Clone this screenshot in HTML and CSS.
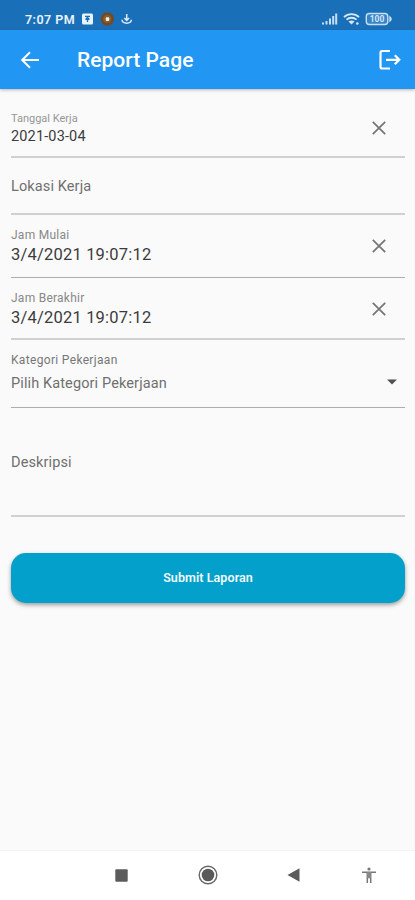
FILE: index.html
```html
<!DOCTYPE html>
<html lang="id">
<head>
<meta charset="utf-8">
<title>Report Page</title>
<link rel="stylesheet" href="styles.css">
</head>
<body>
<div class="status">
  <span class="time">7:07 PM</span>
  <svg class="notes" width="54" height="14" viewBox="0 0 54 14">
    <rect x="0" y="1.500" width="11" height="11" rx="1.500" fill="#e8f3fc"/>
    <path d="M3 4.300h5M5.500 10V6M3.500 7.500l2-2 2 2" stroke="#1a70b8" stroke-width="1.300" fill="none"/>
    <circle cx="25.300" cy="7" r="6.800" fill="#704a2b"/>
    <circle cx="25.300" cy="7" r="4" fill="#87602f"/>
    <rect x="23.800" y="5.200" width="3.400" height="3.800" rx="1" fill="#f5ede3"/>
    <path d="M44.700 2v6M42.300 6l2.400 2.400L47.100 6M40 7.800c.3 4.500 9.100 4.500 9.400 0" stroke="#d9eafa" stroke-width="1.500" fill="none"/>
  </svg>
  <svg class="signals" width="74" height="14" viewBox="0 0 74 14">
    <path d="M2 12.500v-2M5.500 12.500V9M9 12.500V6.500M12.200 12.500V4M15.200 12.500V1.500" stroke="#c5def4" stroke-width="2"/>
    <path d="M23 5.200c4.200-4 10.800-4 15 0M25.500 7.700c2.800-2.600 7.200-2.600 10 0" stroke="#d5e8f8" stroke-width="1.800" fill="none"/>
    <path d="M27.500 9.500q3-2.200 6 0l-3 3z" fill="#d5e8f8"/>
    <circle cx="36.300" cy="11.500" r="1.300" fill="#d5e8f8"/>
    <rect x="45.300" y="1.500" width="21.500" height="11" rx="3" fill="#3984c4" stroke="#c5def4" stroke-width="1.400"/>
    <path d="M68.300 3.500q5 3.500 0 7z" fill="#c5def4"/>
    <text class="charge" x="56" y="10" text-anchor="middle">100</text>
  </svg>
</div>
<header class="appbar">
  <svg class="back" width="20" height="18" viewBox="0 0 20 18"><path d="M19 9H2.500M10 1.200L2.200 9l7.800 7.800" fill="none" stroke="#fff" stroke-width="2"/></svg>
  <h1>Report Page</h1>
  <svg class="logout" width="24" height="22" viewBox="0 0 24 22"><path d="M12 2H4.200Q2.500 2 2.500 3.700v14.100q0 1.700 1.700 1.700H12M8 10.800h13M16.800 6.300l4.500 4.500-4.500 4.500" fill="none" stroke="#fff" stroke-width="2.200"/></svg>
</header>
<main>
  <div class="field date">
    <div><div class="label">Tanggal Kerja</div><div class="value">2021-03-04</div></div>
    <svg class="clear" width="14" height="14" viewBox="0 0 14 14"><path d="M.8.800l12.400 12.400M13.200.8L.8 13.200"/></svg>
  </div>
  <div class="field place"><div class="hint">Lokasi Kerja</div></div>
  <div class="field start">
    <div><div class="label">Jam Mulai</div><div class="value">3/4/2021 19:07:12</div></div>
    <svg class="clear" width="14" height="14" viewBox="0 0 14 14"><path d="M.8.800l12.400 12.400M13.200.8L.8 13.200"/></svg>
  </div>
  <div class="field end">
    <div><div class="label">Jam Berakhir</div><div class="value">3/4/2021 19:07:12</div></div>
    <svg class="clear" width="14" height="14" viewBox="0 0 14 14"><path d="M.8.800l12.400 12.400M13.200.8L.8 13.200"/></svg>
  </div>
  <div class="field category">
    <div><div class="label">Kategori Pekerjaan</div><div class="hint">Pilih Kategori Pekerjaan</div></div>
    <svg class="caret" width="10" height="6" viewBox="0 0 10 6"><path d="M0 .5h10L5 5.500z" fill="#505050"/></svg>
  </div>
  <div class="field desc"><div class="hint">Deskripsi</div></div>
  <button class="submit" type="button">Submit Laporan</button>
</main>
<nav class="sysnav">
  <svg width="13" height="13" viewBox="0 0 13 13"><rect x=".3" y=".3" width="12.400" height="12.400" rx="1" fill="#5c5c5c"/></svg>
  <svg width="20" height="20" viewBox="0 0 20 20"><circle cx="10" cy="10" r="8.800" fill="none" stroke="#686868" stroke-width="1.400"/><circle cx="10" cy="10" r="6.300" fill="#5a5a5a"/></svg>
  <svg width="13" height="14" viewBox="0 0 13 14"><path d="M12.500.3v13.400L.5 7z" fill="#5c5c5c"/></svg>
  <svg width="16" height="17" viewBox="0 0 16 17"><circle cx="8" cy="2" r="1.600" fill="#777"/><path d="M1 5.300h14M6.300 5v11M9.700 5v11M6.300 10.500h3.400" fill="none" stroke="#777" stroke-width="1.500"/><path d="M6 5h4v6H6z" fill="#888"/></svg>
</nav>
</body>
</html>
```

FILE: styles.css
```css
* { box-sizing: border-box; }
body {
  margin: 0;
  height: 900px;
  display: flex;
  flex-direction: column;
  background: #fafafa;
  font-family: Roboto, "Liberation Sans", sans-serif;
  color: #3c3c3c;
  overflow: hidden;
}
svg { display: block; flex: none; }
.status {
  height: 30px;
  display: flex;
  align-items: center;
  padding: 8px 20px 0 25px;
  background: #1a70b8;
}
.time { width: 56px; font-size: 12.5px; font-weight: 600; letter-spacing: .45px; color: #e8f3fc; white-space: nowrap; }
.notes { margin-left: 1px; }
.signals { margin-left: auto; }
.charge { font-size: 8.5px; font-weight: 700; fill: #d5e8f8; }
.appbar {
  height: 59px;
  display: flex;
  align-items: center;
  padding: 0 13px 0 20px;
  background: #2196f3;
  box-shadow: 0 1px 3px rgba(90, 50, 30, .35);
}
h1 { margin: 1px 0 0 37px; font-size: 21px; font-weight: 500; line-height: 24px; letter-spacing: .03px; color: #fff; white-space: nowrap; }
.logout { margin-left: auto; }
main { flex: 1; padding: 0 10px 0 11px; }
.field {
  display: flex;
  justify-content: space-between;
  border-bottom: 2px solid #d0d0d0;
  white-space: nowrap;
}
.label { font-size: 12px; line-height: 14px; letter-spacing: .25px; color: #888; }
.value { margin-top: 3px; font-size: 16.5px; line-height: 20px; letter-spacing: .2px; }
.hint { font-size: 14.5px; line-height: 18px; letter-spacing: .12px; color: #707070; }
.clear { margin: 11px 19px 0 0; fill: none; stroke: #777; stroke-width: 1.8; }
.date { height: 69px; padding-top: 23px; }
.date .label { font-size: 11px; letter-spacing: 0; color: #969696; }
.date .value { margin-top: 1px; font-size: 14.5px; letter-spacing: .15px; }
.date .clear { margin-top: 9px; }
.place { height: 57px; padding-top: 20px; }
.start { height: 63px; padding-top: 13px; border-bottom: 1px solid #adadad; }
.end { height: 62px; padding-top: 13px; }
.category { height: 68px; padding-top: 13px; border-bottom: 1px solid #adadad; }
.category .label { font-size: 12px; letter-spacing: .33px; color: #777; margin-bottom: 8px; }
.caret { margin: 26px 8px 0 0; }
.desc { height: 109px; padding-top: 46px; }
.submit {
  display: block;
  width: 100%;
  height: 50px;
  margin-top: 36px;
  border: 0;
  border-radius: 15px;
  background: #02a0ca;
  box-shadow: 0 2px 4px rgba(0, 0, 0, .38);
  font: 600 12.5px/16px Roboto, sans-serif;
  letter-spacing: .08px;
  color: #f2fbfe;
}
.sysnav {
  height: 50px;
  display: grid;
  grid-template-columns: 87px 86px 84px 68px;
  justify-items: center;
  align-items: center;
  padding: 0 0 1px 78px;
  background: #fff;
  border-top: 1px solid #f3f3f3;
}
```
